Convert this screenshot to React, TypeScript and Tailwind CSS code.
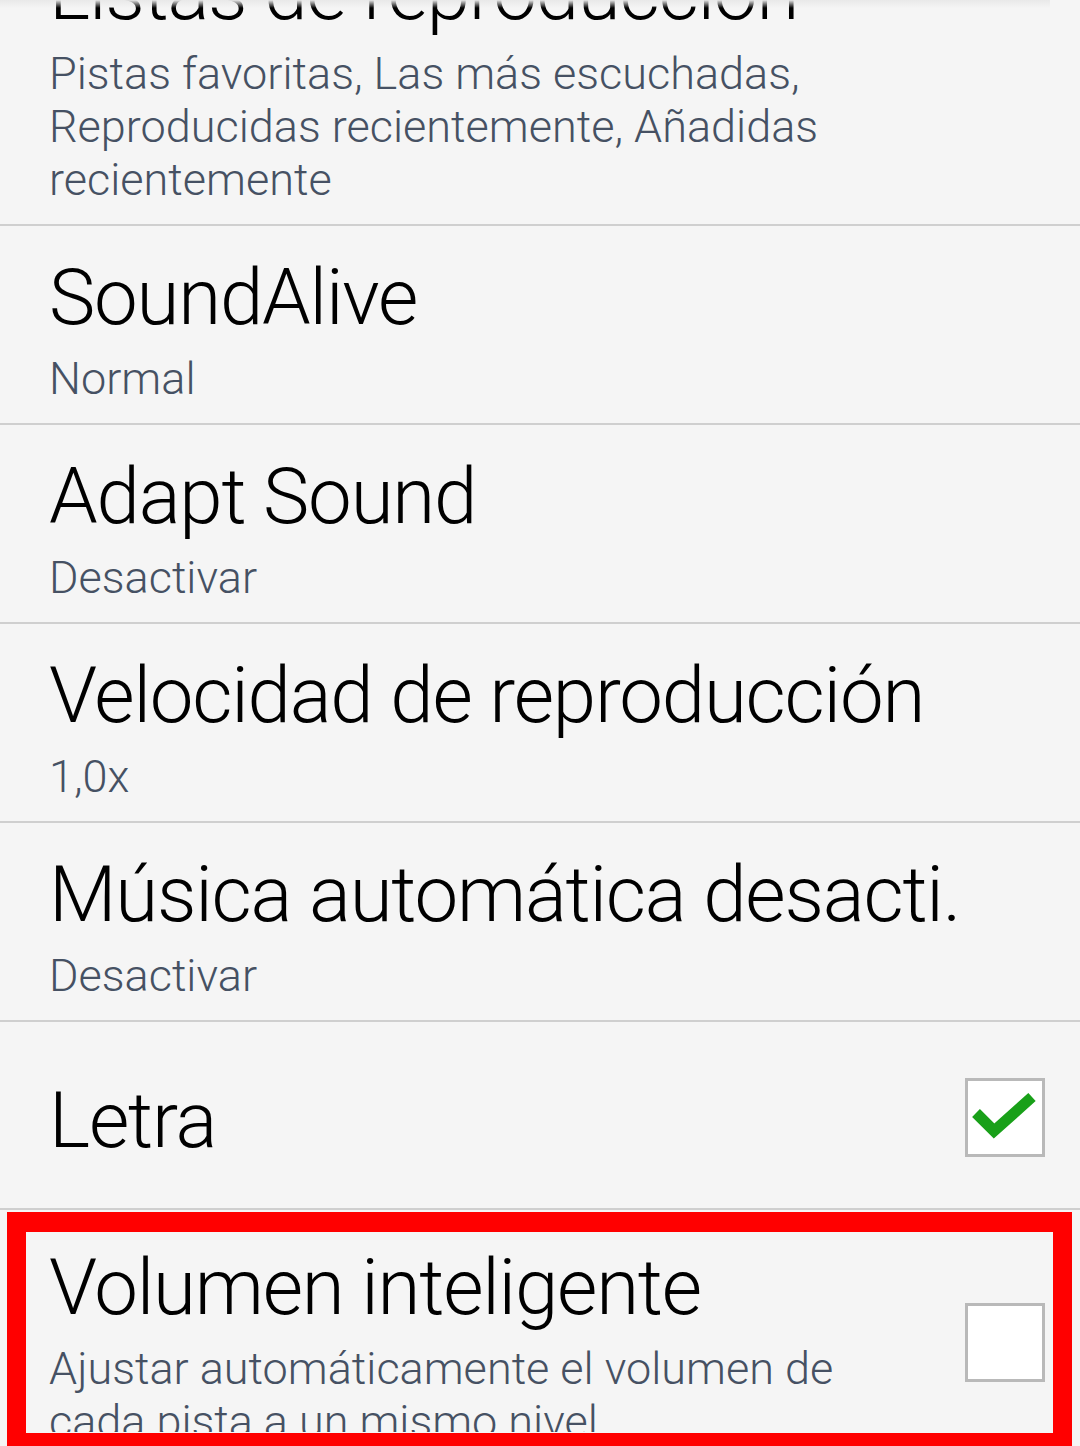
import React from "react";

const font = { fontFamily: "Roboto, 'Noto Sans', sans-serif" };

function Row({
  title,
  sub,
  first,
}: {
  title: string;
  sub: string[];
  first?: boolean;
}) {
  return (
    <div
      className={`border-b-2 border-[#cfcfcf] pl-[49px] pr-[36px] pt-[22px] pb-[18px] ${
        first ? "-mt-[79px]" : ""
      }`}
    >
      <div className="text-[78px] leading-[100px] font-light tracking-[-1.2px] text-black whitespace-nowrap">{title}</div>
      <div className="mt-[4px] text-[45px] leading-[53px] font-light text-[#465163]">
        {sub.map((s, i) => (
          <div key={i} className="whitespace-nowrap">
            {s}
          </div>
        ))}
      </div>
    </div>
  );
}

function Checkbox({ checked }: { checked?: boolean }) {
  return (
    <div className="w-[80px] h-[79px] shrink-0 bg-white border-[3px] border-[#b9b9b9] flex items-center justify-center">
      {checked && (
        <svg width="70" height="56" viewBox="0 0 70 56">
          <polyline
            points="6,24 24,42 62,8"
            fill="none"
            stroke="#19a019"
            strokeWidth="11"
            strokeLinecap="butt"
            strokeLinejoin="miter"
          />
        </svg>
      )}
    </div>
  );
}

export default function App() {
  return (
    <div className="relative w-[1080px] h-[1446px] overflow-hidden bg-[#f5f5f5]" style={font}>
      <div className="absolute left-0 top-0 w-[1050px] h-[8px] bg-gradient-to-b from-[#e9e9e9] to-transparent z-10" />
      <Row
        first
        title="Listas de reproducción"
        sub={[
          "Pistas favoritas, Las más escuchadas,",
          "Reproducidas recientemente, Añadidas",
          "recientemente",
        ]}
      />
      <Row title="SoundAlive" sub={["Normal"]} />
      <Row title="Adapt Sound" sub={["Desactivar"]} />
      <Row title="Velocidad de reproducción" sub={["1,0x"]} />
      <Row title="Música automática desacti." sub={["Desactivar"]} />
      <div className="h-[188px] border-b-2 border-[#cfcfcf] pl-[49px] pr-[35px] flex items-center justify-between">
        <div className="pt-[12px] text-[78px] leading-[100px] font-light tracking-[-1.2px] text-black">Letra</div>
        <div className="mt-[4px]">
          <Checkbox checked />
        </div>
      </div>
      <div className="pl-[49px] pr-[35px] flex items-start justify-between">
        <div className="pt-[28px]">
          <div className="text-[78px] leading-[100px] font-light tracking-[-1.2px] text-black whitespace-nowrap">Volumen inteligente</div>
          <div className="mt-[4px] text-[45px] leading-[53px] font-light text-[#465163]">
            <div className="whitespace-nowrap">Ajustar automáticamente el volumen de</div>
            <div className="whitespace-nowrap">cada pista a un mismo nivel</div>
          </div>
        </div>
        <div className="pt-[93px]">
          <Checkbox />
        </div>
      </div>
      <div className="absolute left-[7px] top-[1212px] w-[1065px] h-[240px] border-[19px] border-t-[20px] border-[#ff0000] z-20" />
      <div className="absolute left-0 top-[1432px] w-[1080px] h-[14px] bg-[#f5f5f5] z-10" />
    </div>
  );
}
